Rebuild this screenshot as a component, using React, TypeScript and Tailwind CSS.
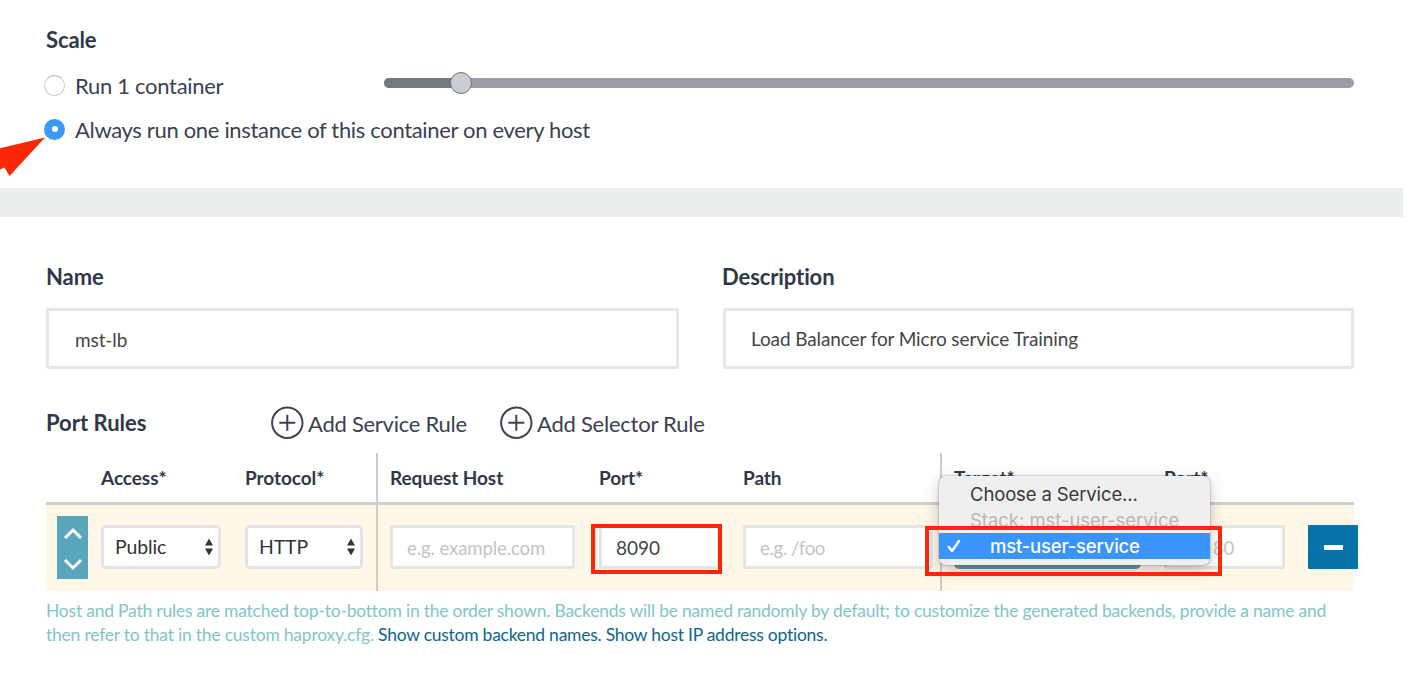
import type { ReactNode } from "react";

function PlusCircle() {
  return (
    <svg width="34" height="34" viewBox="0 0 34 34" fill="none" stroke="#3b4252" className="shrink-0">
      <circle cx="17.3" cy="16.7" r="15.2" strokeWidth="2" />
      <path d="M9.3 16.7H25.3M17.3 8.7V24.7" strokeWidth="2" />
    </svg>
  );
}

function Radio({ checked }: { checked?: boolean }) {
  return checked ? (
    <span className="flex size-[21px] shrink-0 items-center justify-center rounded-full bg-[#3b99fc]">
      <span className="size-[6px] rounded-full bg-white" />
    </span>
  ) : (
    <span className="size-[21px] shrink-0 rounded-full border-[1.5px] border-[#cbcbcb] border-t-[#b4b4b4] bg-white" />
  );
}

function Select({ className, children }: { className: string; children: ReactNode }) {
  return (
    <div className={`flex h-[44px] items-center justify-between rounded-[5px] border-[3px] border-[#e6e3e6] bg-white pr-[4px] pl-[11px] text-[19.4px] tracking-[-0.1px] ${className}`}>
      <span className="pb-[1px]">{children}</span>
      <svg width="10" height="18" viewBox="0 0 10 18" fill="#333">
        <path d="M5 0.5L9 7.5H1ZM5 17.5L1 10.5H9Z" />
      </svg>
    </div>
  );
}

function Field({ className, children }: { className: string; children?: ReactNode }) {
  return (
    <div className={`flex h-[44px] items-center rounded-[2px] border-[3px] border-[#e5e5e6] bg-white pt-[2px] ${className}`}>
      {children}
    </div>
  );
}

export default function App() {
  return (
    <div className="relative h-[676px] w-[1420px] overflow-hidden bg-white font-[Lato,sans-serif] text-[22px] leading-[28px] text-[#3a4150]">
      <section className="h-[188px] pt-[26px] pr-[66px] pl-[44px]">
        <h2 className="pl-[2px] font-bold tracking-[-0.1px] text-[#2f3848]">Scale</h2>
        <div className="mt-[15px] flex h-[32px] items-center">
          <div className="flex w-[340px] items-center gap-[10px]">
            <Radio />
            <span className="pt-[2px] tracking-[-0.3px]">Run 1 container</span>
          </div>
          <div className="relative mb-[4px] flex h-[10px] flex-1 overflow-visible rounded-full bg-[#989ea3]">
            <div className="w-[76px] rounded-l-full bg-[#737a80]" />
            <span className="absolute top-[-6px] left-[66px] size-[22px] rounded-full border-[1.5px] border-[#6c7379] bg-[#c9ced4]" />
          </div>
        </div>
        <div className="mt-[12px] flex h-[32px] items-center gap-[10px]">
          <Radio checked />
          <span className="pt-[2px] tracking-[-0.33px]">Always run one instance of this container on every host</span>
        </div>
      </section>

      <div className="h-[29px] w-[1403px] bg-[#ebeeef]" />

      <section className="pt-[46px] pr-[66px] pl-[46px]">
        <div className="flex gap-[44px] font-bold tracking-[-0.1px] text-[#2f3848]">
          <span className="w-[632px]">Name</span>
          <span>Description</span>
        </div>
        <div className="mt-[17px] flex gap-[44px] text-[19px] tracking-[-0.11px] text-[#444]">
          <div className="flex h-[61px] w-[633px] items-center rounded-[2px] border-[3px] border-[#e6e6e6] pt-[3px] pl-[26px]">mst-lb</div>
          <div className="flex h-[61px] flex-1 items-center rounded-[2px] border-[3px] border-[#e6e6e6] pl-[25px]">Load Balancer for Micro service Training</div>
        </div>

        <div className="mt-[37px] flex h-[34px] items-center">
          <span className="w-[224px] font-bold text-[#2f3848]">Port Rules</span>
          <span className="flex w-[229px] items-center gap-[4px]"><PlusCircle /><span className="pt-[1px] tracking-[-0.26px]">Add Service Rule</span></span>
          <span className="flex items-center gap-[4px]"><PlusCircle /><span className="pt-[1px] tracking-[-0.24px]">Add Selector Rule</span></span>
        </div>

        <div className="mt-[13px] flex h-[138px]">
          <div className="w-[330px] shrink-0">
            <div className="flex h-[52px] items-center border-b-[3px] border-[#d0d0d1] pl-[55px] text-[19px] font-bold tracking-[-0.05px] text-[#2f3848]">
              <span className="w-[144px]">Access*</span><span>Protocol*</span>
            </div>
            <div className="flex h-[86px] items-center bg-[#fff8e8] pb-[2px] pl-[11px] text-[#333]">
              <div className="flex h-[63px] w-[31px] flex-col items-center justify-between bg-[#5aa6bd] pt-[10px] pb-[7px]">
                <svg width="20" height="14" viewBox="0 0 20 14" fill="none" stroke="white" strokeWidth="3"><path d="M2 12L10 4L18 12" /></svg>
                <svg width="20" height="14" viewBox="0 0 20 14" fill="none" stroke="white" strokeWidth="3"><path d="M2 2L10 10L18 2" /></svg>
              </div>
              <Select className="ml-[13px] w-[120px]">Public</Select>
              <Select className="ml-[24px] w-[118px]">HTTP</Select>
            </div>
          </div>
          <div className="w-[564px] shrink-0 border-l-[2px] border-[#cccccc]">
            <div className="flex h-[52px] items-center border-b-[3px] border-[#d0d0d1] pl-[12px] text-[19px] font-bold tracking-[-0.08px] text-[#2f3848]">
              <span className="w-[209px]">Request Host</span><span className="w-[144px]">Port*</span><span>Path</span>
            </div>
            <div className="flex h-[86px] items-center bg-[#fff8e8] pb-[2px] pl-[12px] text-[18.6px] tracking-[-0.12px] text-[#c4c4c4]">
              <Field className="w-[185px] pl-[14px]">e.g. example.com</Field>
              <div className="relative ml-[24px]">
                <Field className="w-[121px] pl-[14px] text-[19px] tracking-normal text-[#444]">8090</Field>
                <span className="absolute top-[-1px] left-[-8px] h-[50px] w-[131px] border-[4px] border-[#fb2707]" />
              </div>
              <Field className="ml-[23px] w-[190px] pl-[14px] tracking-[-0.4px]">e.g. /foo</Field>
            </div>
          </div>
          <div className="relative min-w-0 flex-1 border-l-[2px] border-[#cccccc]">
            <div className="flex h-[52px] items-center border-b-[3px] border-[#d0d0d1] pl-[12px] text-[19px] font-bold tracking-[-0.05px] text-[#2f3848]">
              <span className="w-[210px]">Target*</span><span>Port*</span>
            </div>
            <div className="flex h-[86px] items-center bg-[#fff8e8] pb-[2px] pl-[12px] text-[18.6px] tracking-[-0.2px] text-[#c4c4c4]">
              <div className="h-[44px] w-[187px] shrink-0 rounded-[5px] bg-[#6797aa]" />
              <Field className="ml-[23px] w-[121px] shrink-0 pl-[14px]">e.g. 80</Field>
              <div className="ml-[23px] flex h-[44px] w-[50px] shrink-0 items-center justify-center rounded-[1px] bg-[#0573aa]">
                <span className="mt-[1px] h-[5px] w-[19px] bg-white" />
              </div>
            </div>
            <div className="absolute top-[23px] left-[-3px] h-[89px] w-[271px] overflow-visible rounded-[7px] bg-[#efefef] pt-[5px] font-[Inter,sans-serif] text-[18.5px] leading-[26px] text-[#383838] shadow-[0_5px_16px_rgba(0,0,0,0.22),0_0_2px_rgba(0,0,0,0.45)]">
              <div className="pl-[31px] tracking-[-0.13px] whitespace-nowrap">Choose a Service...</div>
              <div className="pl-[31px] tracking-[-0.04px] whitespace-nowrap text-[#b8b8b8]">Stack: mst-user-service</div>
              <div className="flex h-[26px] items-center bg-[#3a94fb] pl-[8px] font-medium tracking-[-0.2px] text-white">
                <svg width="14" height="14" viewBox="0 0 14 14" fill="none" stroke="white" strokeWidth="2.5" strokeLinecap="round" strokeLinejoin="round"><path d="M1.8 8L5 12L12 2" /></svg>
                <span className="ml-[29px]">mst-user-service</span>
              </div>
            </div>
            <span className="absolute top-[73px] left-[-17px] h-[50px] w-[297px] border-[4px] border-[#fb2707]" />
          </div>
        </div>

        <p className="mt-[8px] text-[17.5px] leading-[24px] tracking-[-0.223px] whitespace-nowrap text-[#82c4c8]">
          Host and Path rules are matched top-to-bottom in the order shown. Backends will be named randomly by default; to customize the generated backends, provide a name and
          <br />
          then refer to that in the custom haproxy.cfg. <a className="tracking-[-0.25px] text-[#10648c]">Show custom backend names.</a> <a className="tracking-[-0.25px] text-[#10648c]">Show host IP address options.</a>
        </p>
      </section>

      <svg className="absolute top-[136px] left-0" width="46" height="42" viewBox="0 0 46 42" fill="#fb2707">
        <path d="M0 12.3L45 1.5L9.5 40L4.5 31.5L0 33.5Z" />
      </svg>
    </div>
  );
}
